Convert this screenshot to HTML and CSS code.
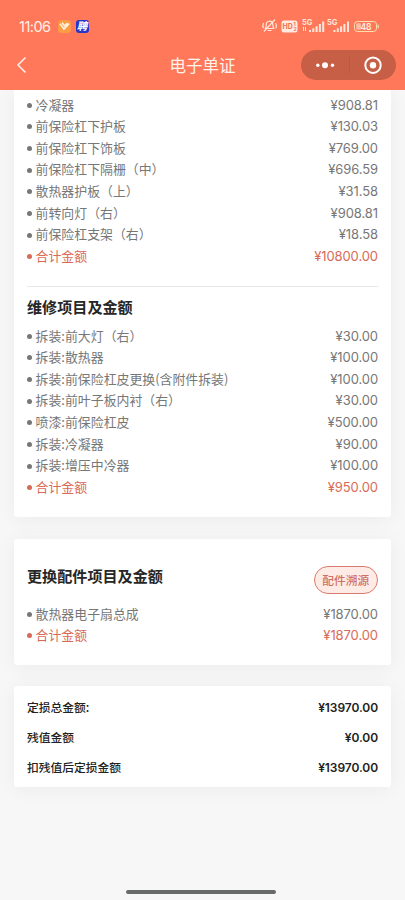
FILE: index.html
```html
<!DOCTYPE html>
<html lang="zh-CN">
<head>
<meta charset="utf-8">
<meta name="viewport" content="width=device-width, initial-scale=1">
<title>电子单证</title>
<link rel="stylesheet" href="styles.css">
</head>
<body>
<div class="screen">
  <header class="top">
    <div class="status">
      <span class="clock">11:06</span>
      <svg class="app" width="13" height="13" viewBox="0 0 13 13"><rect width="13" height="13" rx="3" fill="#ff9a45"/><path d="M2.300 4.300l2.500 3.200M4.500 3.200l2.100 2.700M5.600 9.400l5-5.200M7.200 5.300l1.800-1.700M4.800 7.500l1 .9" fill="none" stroke="#fff3dc" stroke-width="1.600" stroke-linecap="round"/></svg>
      <span class="job">聘</span>
      <div class="signals">
        <svg width="118" height="16" viewBox="0 0 118 16">
          <g fill="none" stroke="#ffe6dc" stroke-width="1.2" stroke-linecap="round" stroke-linejoin="round">
            <path d="M4.2 10.5c1.2-1.2.9-3.2 1.1-4.500C5.800 2.400 11.300 2.200 11.800 6c.2 1.700 0 3.300 1.200 4.500zM7 12.500h3M3.300 13L13.600 2M2.500 5.500C1.600 7 1.800 8.700 2.300 9.800M14.800 5.500c.8 1.500.7 3 .2 4.300"/>
          </g>
          <rect x="20.500" y="2.500" width="16" height="12" rx="2.500" fill="#ffe9e1"/>
          <text x="21.500" y="11.200" class="hd">HD</text><text x="32.600" y="8" class="hdn">1</text><text x="32.600" y="13.300" class="hdn">2</text>
          <g fill="#ffe6dc">
            <text x="41" y="7.400" class="net">5G</text>
            <path d="M42 9h1v4h-1zM44 9h1v4h-1zM48 12h2v2h-2zM51.300 10.300h2v3.700h-2zM54.600 8.300h2v5.700h-2zM57.900 6h2v8h-2zM61.200 3.500h2V14h-2z"/>
            <text x="66" y="7.400" class="net">5G</text>
            <path d="M72.500 12h2v2h-2zM75.800 10.300h2v3.700h-2zM79.100 8.300h2v5.700h-2zM82.400 6h2v8h-2zM86 3.500h2V14h-2z"/>
          </g>
          <rect x="93.500" y="3.500" width="22" height="10" rx="3" fill="none" stroke="#ffdfae"/>
          <rect x="95.300" y="5.300" width="4.500" height="6.400" rx="1" fill="#ffbda5"/>
          <path d="M117.200 6.800v3.400" stroke="#ffdfae" stroke-width="1.200"/>
          <text x="105" y="11.600" class="bat">48</text>
        </svg>
      </div>
    </div>
    <nav class="nav">
      <svg class="back" width="12" height="18" viewBox="0 0 12 18"><path d="M9.500 1.500L2 9l7.500 7.500" fill="none" stroke="#fff0e9" stroke-width="1.500"/></svg>
      <h1 class="title">电子单证</h1>
      <div class="capsule">
        <svg width="94" height="30" viewBox="0 0 94 30"><g fill="#fff"><circle cx="15.800" cy="15.200" r="1.700"/><circle cx="23" cy="15.200" r="3"/><circle cx="30.500" cy="15.200" r="1.700"/><circle cx="71" cy="15.200" r="3.200"/></g><circle cx="71" cy="15.200" r="7.700" fill="none" stroke="#fff" stroke-width="2"/><path d="M47.500 6v18" stroke="#b95a42" stroke-width="1"/></svg>
      </div>
    </nav>
  </header>
  <main class="page">
    <section class="card parts">
      <ul class="list">
        <li><span>冷凝器</span><b>¥908.81</b></li>
        <li><span>前保险杠下护板</span><b>¥130.03</b></li>
        <li><span>前保险杠下饰板</span><b>¥769.00</b></li>
        <li><span>前保险杠下隔栅（中）</span><b>¥696.59</b></li>
        <li><span>散热器护板（上）</span><b>¥31.58</b></li>
        <li><span>前转向灯（右）</span><b>¥908.81</b></li>
        <li><span>前保险杠支架（右）</span><b>¥18.58</b></li>
        <li class="sum"><span>合计金额</span><b>¥10800.00</b></li>
      </ul>
      <h2 class="heading divided">维修项目及金额</h2>
      <ul class="list">
        <li><span>拆装:前大灯（右）</span><b>¥30.00</b></li>
        <li><span>拆装:散热器</span><b>¥100.00</b></li>
        <li><span>拆装:前保险杠皮更换(含附件拆装)</span><b>¥100.00</b></li>
        <li><span>拆装:前叶子板内衬（右）</span><b>¥30.00</b></li>
        <li><span>喷漆:前保险杠皮</span><b>¥500.00</b></li>
        <li><span>拆装:冷凝器</span><b>¥90.00</b></li>
        <li><span>拆装:增压中冷器</span><b>¥100.00</b></li>
        <li class="sum"><span>合计金额</span><b>¥950.00</b></li>
      </ul>
    </section>
    <section class="card replaced">
      <div class="head-row"><h2 class="heading">更换配件项目及金额</h2><button class="trace">配件溯源</button></div>
      <ul class="list">
        <li><span>散热器电子扇总成</span><b>¥1870.00</b></li>
        <li class="sum"><span>合计金额</span><b>¥1870.00</b></li>
      </ul>
    </section>
    <section class="card totals">
      <div class="total"><span>定损总金额:</span><b>¥13970.00</b></div>
      <div class="total"><span>残值金额</span><b>¥0.00</b></div>
      <div class="total"><span>扣残值后定损金额</span><b>¥13970.00</b></div>
    </section>
  </main>
  <div class="home"></div>
</div>
</body>
</html>
```
FILE: styles.css
```css
* { box-sizing: border-box; }
body { margin: 0; font-family: "Noto Sans CJK SC", sans-serif; background: #f7f7f7; }
.screen { height: 900px; display: flex; flex-direction: column; overflow: hidden; }
.top { height: 90px; flex: none; background: #ff7859; position: relative; z-index: 1; }
.status { height: 50px; padding: 2px 26px 0 19px; display: flex; align-items: center; }
.clock { width: 38.500px; font: 400 14.500px Inter, sans-serif; letter-spacing: -.5px; color: #fff0e8; }
.job { width: 13px; height: 13px; margin-left: 5px; border-radius: 3px; background: #2537c8; color: #fff; font-size: 10.500px; font-weight: 700; font-style: italic; line-height: 12px; text-align: center; }
.signals { margin-left: auto; height: 16px; }
.signals svg { display: block; }
.hd { font: 700 7px Inter, sans-serif; fill: #f0704f; }
.hdn { font: 700 5px Inter, sans-serif; fill: #f0704f; }
.net { font: 700 7.500px Inter, sans-serif; }
.bat { font: 600 8.500px Inter, sans-serif; fill: #fff1e9; text-anchor: middle; }
.nav { height: 30px; display: grid; grid-template-columns: 95px 1fr 95px; align-items: center; padding: 0 9px; }
.back { margin-left: 6.500px; }
.title { margin: 0; text-align: center; font-size: 16.500px; font-weight: 400; line-height: 30px; color: #fff3ed; }
.capsule { height: 30px; border-radius: 15px; background: #c65f45; padding-left: 1px; }
.capsule svg { display: block; }
.page { flex: 1; padding: 0 14px; }
.card { background: #fff; border-radius: 3px; padding: 0 13px; box-shadow: 0 2px 20px rgba(0, 0, 0, .05); }
.parts { height: 426.500px; padding-top: 4px; border-radius: 0 0 3px 3px; }
.replaced { height: 126px; margin-top: 22.500px; padding-top: 27px; }
.totals { height: 101px; margin-top: 21px; padding-top: 7px; }
.list { list-style: none; margin: 0; padding: 0; }
.list li { display: flex; align-items: center; height: 21.640px; font-size: 12.900px; line-height: 21px; color: #777; }
.list li::before { content: ""; width: 5px; height: 5px; border-radius: 50%; background: #777; margin-right: 3.600px; position: relative; top: .5px; }
.list span { padding-bottom: 1.500px; }
.list b, .total b { margin-left: auto; font-family: Inter, sans-serif; letter-spacing: -.08px; }
.list b { font-weight: 400; font-size: 13px; padding-top: .5px; }
.list .sum { color: #d96a57; }
.list .sum::before { background: #d96a57; }
.heading { margin: 0; font-size: 15.100px; font-weight: 700; line-height: 22px; color: #262626; }
.divided { margin-top: 19px; border-top: 1px solid #e8e8e8; height: 39px; padding-top: 8px; }
.head-row { display: flex; justify-content: space-between; height: 37px; }
.trace { width: 64.500px; height: 28px; padding: 0; border: 1px solid #d97b6c; border-radius: 14px; background: #ffebe6; color: #cf7264; font: 500 11.700px/24px "Noto Sans CJK SC", sans-serif; }
.head-row .heading { line-height: 19px; }
.total { height: 30px; display: flex; align-items: center; font-size: 11.750px; font-weight: 500; color: #222; }
.total span { padding-bottom: 3px; }
.total b { font-size: 12px; font-weight: 600; padding-bottom: 1px; }
.home { flex: none; width: 150px; height: 4px; margin: 0 auto 6px; border-radius: 2px; background: #696b6a; position: relative; left: -1.500px; }
```
